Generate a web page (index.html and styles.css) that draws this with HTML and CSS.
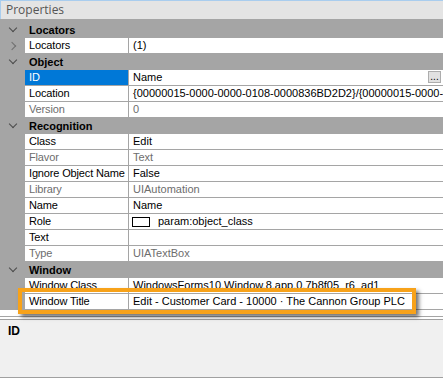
FILE: index.html
```html
<!DOCTYPE html>
<html lang="en">
<head>
    <meta charset="UTF-8">
    <title>Properties</title>
    <link rel="stylesheet" href="styles.css">
</head>
<body>
    <div class="panel">
        <div class="title">Properties</div>
        <div class="grid">
            <div class="category"><span class="gutter"><span class="chev down"></span></span><span class="cat-name">Locators</span></div>
            <div class="row"><span class="gutter"><span class="chev right"></span></span><span class="name">Locators</span><span class="value">(1)</span></div>

            <div class="category"><span class="gutter"><span class="chev down"></span></span><span class="cat-name">Object</span></div>
            <div class="row selected"><span class="gutter"></span><span class="name">ID</span><span class="value">Name<span class="dots">...</span></span></div>
            <div class="row"><span class="gutter"></span><span class="name">Location</span><span class="value">{00000015-0000-0000-0108-0000836BD2D2}/{00000015-0000-0000-0108-0000836BD2D2}</span></div>
            <div class="row readonly"><span class="gutter"></span><span class="name">Version</span><span class="value">0</span></div>

            <div class="category"><span class="gutter"><span class="chev down"></span></span><span class="cat-name">Recognition</span></div>
            <div class="row"><span class="gutter"></span><span class="name">Class</span><span class="value">Edit</span></div>
            <div class="row readonly"><span class="gutter"></span><span class="name">Flavor</span><span class="value">Text</span></div>
            <div class="row"><span class="gutter"></span><span class="name">Ignore Object Name</span><span class="value">False</span></div>
            <div class="row readonly"><span class="gutter"></span><span class="name">Library</span><span class="value">UIAutomation</span></div>
            <div class="row"><span class="gutter"></span><span class="name">Name</span><span class="value">Name</span></div>
            <div class="row"><span class="gutter"></span><span class="name">Role</span><span class="value role"><span class="swatch"></span>param:object_class</span></div>
            <div class="row"><span class="gutter"></span><span class="name">Text</span><span class="value"></span></div>
            <div class="row readonly"><span class="gutter"></span><span class="name">Type</span><span class="value">UIATextBox</span></div>

            <div class="category"><span class="gutter"><span class="chev down"></span></span><span class="cat-name">Window</span></div>
            <div class="row"><span class="gutter"></span><span class="name">Window Class</span><span class="value">WindowsForms10.Window.8.app.0.7b8f05_r6_ad1</span></div>
            <div class="row"><span class="gutter"></span><span class="name">Window Title</span><span class="value">Edit - Customer Card - 10000 · The Cannon Group PLC</span></div>
            <div class="filler"></div>

            <!-- highlight drawn over the Window Title row -->
            <div class="highlight-box"></div>
        </div>
        <div class="description">
            <div class="desc-title">ID</div>
        </div>
    </div>
</body>
</html>
```

FILE: styles.css
```css
/* Page */
body {
    margin: 0;
    font-family: 'Liberation Sans', Arial, sans-serif;
    font-size: 11px;
    color: #000;
    background-color: #fff;
}

.panel {
    width: 443px;
    height: 378px;
    display: flex;
    flex-direction: column;
    overflow: hidden;
}

/* Title bar */
.title {
    height: 19px;
    line-height: 18px;
    padding-left: 5px;
    font-family: 'Open Sans', 'Liberation Sans', sans-serif;
    font-size: 12px;
    color: #555;
    background-color: #e4e4e4;
    border-top: 1px solid #a9cdee;
    border-left: 1px solid #a9cdee;
    box-sizing: border-box;
}

/* Property grid */
.grid {
    position: relative;
    background-color: #a5a5a5;
    padding-top: 3px;
}

.row, .category {
    display: flex;
    height: 16px;
    box-sizing: border-box;
    white-space: nowrap;
}

.gutter {
    flex: 0 0 25px;
    display: flex;
    align-items: center;
    justify-content: center;
}

.category {
    background-color: #a5a5a5;
}
.cat-name {
    font-weight: bold;
    line-height: 16px;
    padding-left: 4px;
}

.row .name {
    flex: 0 0 104px;
    box-sizing: border-box;
    background-color: #fff;
    padding-left: 4px;
    line-height: 15px;
    letter-spacing: -0.15px;
    border-bottom: 1px solid #a5a5a5;
    border-right: 1px solid #a5a5a5;
}
.row .value {
    flex: 1;
    position: relative;
    background-color: #fff;
    padding-left: 4px;
    line-height: 15px;
    border-bottom: 1px solid #a5a5a5;
    overflow: hidden;
}

.row.selected .name {
    background-color: #0078d7;
    color: #fff;
}
.row.readonly .name,
.row.readonly .value {
    color: #6d6d6d;
}

/* Chevrons in the gutter */
.chev {
    width: 5px;
    height: 5px;
    border-right: 1.5px solid #4a4a4a;
    border-bottom: 1.5px solid #4a4a4a;
}
.chev.down {
    transform: translateY(-2px) rotate(45deg);
}
.chev.right {
    border-color: #6f6f6f;
    transform: translateX(-1px) rotate(-45deg);
}

/* Ellipsis button on the selected value */
.dots {
    position: absolute;
    right: 2px;
    top: 1px;
    width: 13px;
    height: 12px;
    line-height: 9px;
    text-align: center;
    font-size: 10px;
    background-color: #e1e1e1;
    border: 1px solid #adadad;
    box-sizing: border-box;
}

/* Role value with colour swatch */
.value.role {
    display: flex;
    align-items: center;
    padding-left: 3px;
}
.swatch {
    width: 18px;
    height: 10px;
    border: 1px solid #000;
    background-color: #fff;
    margin-right: 8px;
    box-sizing: border-box;
}

.filler {
    height: 6px;
    background-color: #fff;
    border-bottom: 1px solid #a5a5a5;
}

/* Orange callout over the Window Title row */
.highlight-box {
    position: absolute;
    left: 18px;
    top: 269px;
    width: 398px;
    height: 26px;
    border: 4px solid #f7a21a;
    box-sizing: border-box;
    box-shadow: 3px 3px 4px rgba(0, 0, 0, 0.55);
}

/* Description pane */
.description {
    flex: 1;
    margin-top: 2px;
    background-color: #f0f0f0;
    border-top: 1px solid #a0a0a0;
    border-bottom: 1px solid #a0a0a0;
    padding: 4px 8px;
}
.desc-title {
    font-weight: bold;
    font-size: 12px;
}
```
